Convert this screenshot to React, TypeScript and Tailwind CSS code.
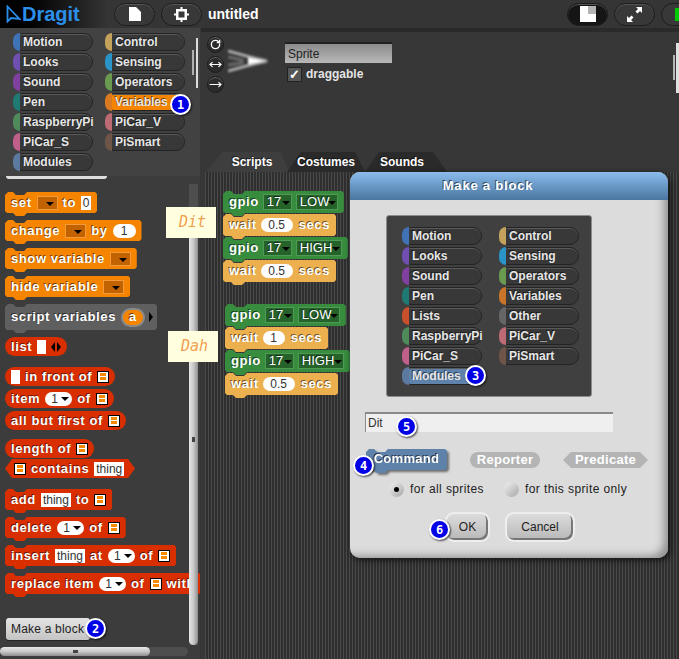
import React from "react";
import { MoveHorizontal, MoveRight, RotateCw } from "lucide-react";

const sans = "font-['Liberation_Sans',Arial,sans-serif]";
const glow = "[text-shadow:-1px_-1px_0_rgba(0,0,0,.55)]";

const commandShape =
  "[clip-path:polygon(0_3px,3px_0,8px_0,11px_3px,19px_3px,22px_0,calc(100%_-_2px)_0,100%_2px,100%_calc(100%_-_5px),calc(100%_-_2px)_calc(100%_-_3px),22px_calc(100%_-_3px),19px_100%,11px_100%,8px_calc(100%_-_3px),2px_calc(100%_-_3px),0_calc(100%_-_5px))]";

const paletteLeft = [
  { name: "Motion", cap: "bg-[#3f73b5]" },
  { name: "Looks", cap: "bg-[#6f4fb0]" },
  { name: "Sound", cap: "bg-[#80409f]" },
  { name: "Pen", cap: "bg-[#1f7a74]" },
  { name: "RaspberryPi", cap: "bg-[#4f8a5a]" },
  { name: "PiCar_S", cap: "bg-[#c0608a]" },
  { name: "Modules", cap: "bg-[#5c7a9f]" },
];

const paletteRight = [
  { name: "Control", cap: "bg-[#c4a25c]" },
  { name: "Sensing", cap: "bg-[#2a93c8]" },
  { name: "Operators", cap: "bg-[#6a9a50]" },
  { name: "Variables", cap: "bg-[#d97a20]" },
  { name: "PiCar_V", cap: "bg-[#bc6a74]" },
  { name: "PiSmart", cap: "bg-[#6f5548]" },
];

const dialogLeft = [
  paletteLeft[0],
  paletteLeft[1],
  paletteLeft[2],
  paletteLeft[3],
  { name: "Lists", cap: "bg-[#c8502c]" },
  paletteLeft[4],
  paletteLeft[5],
  paletteLeft[6],
];

const dialogRight = [
  paletteRight[0],
  paletteRight[1],
  paletteRight[2],
  { name: "Variables", cap: "bg-[#c8752a]" },
  { name: "Other", cap: "bg-[#666666]" },
  paletteRight[4],
  paletteRight[5],
];

function Category({ name, cap, active }: { name: string; cap: string; active?: string }) {
  return (
    <div
      className={`relative flex h-[18px] w-[80px] items-center overflow-visible rounded-full border border-[#232323] pl-[9px] text-[12px] font-bold text-[#e6e6e6] whitespace-nowrap shadow-[inset_0_1px_0_#5a5a5a] ${active ?? "bg-[#383838]"} ${glow}`}
    >
      <span className={`absolute -left-px -top-px h-[18px] w-[7px] rounded-l-full ${cap}`} />
      {name}
    </div>
  );
}

function Badge({ n, pos }: { n: number; pos: string }) {
  return (
    <div
      className={`absolute z-30 flex h-[21px] w-[21px] items-center justify-center rounded-full border-[2.5px] border-white bg-[#0000e6] font-['DejaVu_Sans_Mono',monospace] text-[12px] font-bold text-white shadow-[1px_1px_2px_rgba(0,0,0,.7)] ${pos}`}
    >
      {n}
    </div>
  );
}

function Command({ color, className, children }: { color: string; className?: string; children: React.ReactNode }) {
  return (
    <div
      className={`flex h-[24px] w-fit shrink-0 items-center gap-[5px] whitespace-nowrap pb-[3px] pl-[6px] pr-[6px] text-[13px] font-bold tracking-[.6px] text-white ${glow} ${commandShape} ${color} ${className ?? ""}`}
    >
      {children}
    </div>
  );
}

function Reporter({ className, children }: { className?: string; children: React.ReactNode }) {
  return (
    <div
      className={`flex h-[19px] w-fit items-center gap-[5px] whitespace-nowrap rounded-full bg-[#d92e00] pl-[6px] pr-[6px] text-[13px] font-bold tracking-[.6px] text-white ${glow} ${className ?? ""}`}
    >
      {children}
    </div>
  );
}

function VarSlot({ w = "w-[21px]" }: { w?: string }) {
  return (
    <span className={`relative block h-[14px] ${w} border border-[#f59a3a] bg-[#c26200]`}>
      <span className="absolute right-[3px] top-[5px] h-0 w-0 border-x-[4px] border-t-[4px] border-x-transparent border-t-black" />
    </span>
  );
}

function NumPill({ value, drop, w }: { value: string; drop?: boolean; w: string }) {
  return (
    <span
      className={`relative flex h-[14px] ${w} items-center justify-center rounded-full bg-white text-[12px] font-normal tracking-normal text-[#333] [text-shadow:none] ${drop ? "pr-[8px]" : ""}`}
    >
      {value}
      {drop && (
        <span className="absolute right-[3px] top-[5px] h-0 w-0 border-x-[4px] border-t-[4px] border-x-transparent border-t-black" />
      )}
    </span>
  );
}

function TextSlot({ value, w }: { value: string; w: string }) {
  return (
    <span
      className={`flex h-[14px] ${w} items-center justify-center bg-white text-[12px] font-normal tracking-normal text-[#333] [text-shadow:none]`}
    >
      {value}
    </span>
  );
}

function ListSlot() {
  return (
    <span className="flex h-[12px] w-[12px] flex-col justify-center gap-[1px] border border-black bg-white px-[2px]">
      <span className="block h-[3px] bg-[#f58a00]" />
      <span className="block h-[3px] bg-[#f58a00]" />
    </span>
  );
}

function DarkDrop({ value, w }: { value: string; w: string }) {
  return (
    <span
      className={`relative flex h-[16px] ${w} items-center border border-[#4f9a55] bg-[#25632b] pl-[3px] text-[13px] font-normal tracking-normal text-white`}
    >
      {value}
      <span className="absolute right-[1px] top-[6px] h-0 w-0 border-x-[4px] border-t-[4px] border-x-transparent border-t-black" />
    </span>
  );
}

function Gpio({ level, w }: { level: string; w: string }) {
  return (
    <Command color="bg-[#378c3e]" className={`-mb-[2px] ${w} h-[25px] !gap-[4px]`}>
      gpio
      <DarkDrop value="17" w="w-[29px]" />
      <DarkDrop value={level} w={level === "LOW" ? "w-[42px]" : "w-[46px]"} />
    </Command>
  );
}

function Wait({ value, w, pill }: { value: string; w: string; pill: string }) {
  return (
    <Command color="bg-[#edb04f]" className={`-mb-[2px] ${w} h-[25px] !gap-[4px]`}>
      wait
      <NumPill value={value} w={pill} />
      <span className="ml-[2px]">secs</span>
    </Command>
  );
}

function RoundButton({ dark, children }: { dark?: boolean; children?: React.ReactNode }) {
  return (
    <div
      className={`flex h-[23px] w-[41px] shrink-0 items-center justify-center rounded-full border border-[#1d1d1d] shadow-[inset_0_1px_0_#555] ${dark ? "bg-[#151515]" : "bg-[#383838]"}`}
    >
      {children}
    </div>
  );
}

function RotationButton({ children }: { children: React.ReactNode }) {
  return (
    <div className="flex h-[17px] w-[17px] items-center justify-center rounded-full border border-[#1c1c1c] bg-[#2b2b2b] text-white shadow-[inset_0_1px_0_#666]">
      {children}
    </div>
  );
}

export default function App() {
  return (
    <div className={`relative h-[659px] w-[679px] overflow-hidden bg-[#373737] ${sans}`}>
      {/* Top bar */}
      <header className="flex h-[28px] items-center bg-[#353535]">
        <div className="flex h-full w-[108px] shrink-0 items-center gap-[1px] bg-gradient-to-r from-black via-[#111] to-[#353535] pl-[6px]">
          <svg width="15" height="18" viewBox="0 0 15 18" fill="none">
            <path d="M1.5 1.5 L13.5 14 L5 13 L1.5 16.5 Z" stroke="#2a8fe8" strokeWidth="1.8" />
          </svg>
          <span className="text-[20px] font-bold leading-none text-[#2c90ea]">Dragit</span>
        </div>
        <div className="ml-[6px] flex gap-[6px]">
          <RoundButton>
            <svg width="12" height="14" viewBox="0 0 12 14">
              <path d="M0 0 H7 L12 5 V14 H0 Z" fill="#fff" />
            </svg>
          </RoundButton>
          <RoundButton>
            <svg width="15" height="15" viewBox="0 0 15 15" fill="#fff">
              <rect x="2" y="2" width="11" height="11" />
              <rect x="6.5" y="0" width="2" height="15" />
              <rect x="0" y="6.5" width="15" height="2" />
              <rect x="4.5" y="4.5" width="6" height="6" fill="#383838" />
            </svg>
          </RoundButton>
        </div>
        <span className="ml-[6px] text-[14px] font-bold text-white">untitled</span>
        <div className="ml-auto flex gap-[6px] pr-0">
          <RoundButton dark>
            <svg width="16" height="16" viewBox="0 0 16 16">
              <rect width="16" height="16" fill="#fff" />
              <rect x="8" width="8" height="8" fill="#b5b5b5" />
            </svg>
          </RoundButton>
          <RoundButton>
            <svg width="15" height="15" viewBox="0 0 15 15" fill="#fff">
              <path d="M9 0h6v6l-2-2-2.5 2.5-2-2L11 2z" />
              <path d="M6 15H0V9l2 2 2.5-2.5 2 2L4 13z" />
            </svg>
          </RoundButton>
          <div className="-mr-[23px] flex h-[23px] w-[41px] shrink-0 items-center rounded-full border border-[#1d1d1d] bg-[#383838] pl-[13px]">
            <span className="h-[13px] w-[6px] bg-[#00cc00]" />
          </div>
        </div>
      </header>

      <div className="flex h-[631px]">
        {/* Left column */}
        <aside className="relative flex h-full w-[200px] shrink-0 flex-col overflow-hidden">
          <div className="relative flex h-[148px] shrink-0 gap-[12px] bg-[#424242] pl-[13px] pt-[5px]">
            <div className="flex flex-col gap-[2px]">
              {paletteLeft.map((c) => (
                <Category key={c.name} {...c} />
              ))}
            </div>
            <div className="flex flex-col gap-[2px]">
              {paletteRight.map((c) => (
                <Category key={c.name} {...c} active={c.name === "Variables" ? "bg-[#f58500]" : undefined} />
              ))}
            </div>
            <span className="absolute right-[2px] top-[10px] h-[50px] w-[2px] bg-[#dcdcdc]" />
            <span className="absolute right-[6px] top-[22px] h-[25px] w-[2px] bg-[#b0b0b0]" />
          </div>
          <div className="h-[4px] shrink-0 bg-[#3c3c3c] pl-[6px]">
            <div className="h-[3px] w-[101px] rounded-b-sm bg-[#dedede]" />
          </div>

          {/* Palette */}
          <div className="relative flex flex-1 flex-col items-start overflow-hidden bg-[#3c3c3c] pl-[5px] pt-[12px]">
            <Command color="bg-[#f58500]">
              set <VarSlot /> to <TextSlot value="0" w="w-[10px]" />
            </Command>
            <Command color="bg-[#f58500]" className="mt-[4px]">
              change <VarSlot /> by <NumPill value="1" w="w-[23px]" />
            </Command>
            <Command color="bg-[#f58500]" className="mt-[4px]">
              show variable <VarSlot />
            </Command>
            <Command color="bg-[#f58500]" className="mt-[4px]">
              hide variable <VarSlot />
            </Command>
            <Command color="bg-[#5f5f5f]" className="mt-[4px] h-[29px] !pr-[4px]">
              script variables
              <span className="flex h-[19px] w-[24px] items-center justify-center rounded-full border-[2px] border-[#8a8a8a] bg-[#f58500] text-[13px]">
                a
              </span>
              <span className="-ml-[1px] h-0 w-0 border-y-[5px] border-l-[4px] border-y-transparent border-l-black" />
            </Command>
            <Reporter className="mt-[4px]">
              list
              <span className="h-[14px] w-[9px] bg-white" />
              <span className="flex gap-[2px]">
                <span className="h-0 w-0 border-y-[5px] border-r-[4px] border-y-transparent border-r-black" />
                <span className="h-0 w-0 border-y-[5px] border-l-[4px] border-y-transparent border-l-black" />
              </span>
            </Reporter>
            <Reporter className="mt-[11px]">
              <span className="h-[14px] w-[9px] bg-white" />
              in front of <ListSlot />
            </Reporter>
            <Reporter className="mt-[3px]">
              item <NumPill value="1" drop w="w-[27px]" /> of <ListSlot />
            </Reporter>
            <Reporter className="mt-[3px]">
              all but first of <ListSlot />
            </Reporter>
            <Reporter className="mt-[9px]">
              length of <ListSlot />
            </Reporter>
            <div
              className={`mt-px flex h-[19px] w-[130px] items-center gap-[5px] bg-[#d92e00] pl-[9px] text-[13px] font-bold tracking-[.6px] text-white whitespace-nowrap ${glow} [clip-path:polygon(0_50%,7px_0,calc(100%_-_7px)_0,100%_50%,calc(100%_-_7px)_100%,7px_100%)]`}
            >
              <ListSlot /> contains <TextSlot value="thing" w="w-[30px]" />
            </div>
            <Command color="bg-[#d92e00]" className="mt-[11px]">
              add <TextSlot value="thing" w="w-[30px]" /> to <ListSlot />
            </Command>
            <Command color="bg-[#d92e00]" className="mt-[4px]">
              delete <NumPill value="1" drop w="w-[27px]" /> of <ListSlot />
            </Command>
            <Command color="bg-[#d92e00]" className="mt-[4px]">
              insert <TextSlot value="thing" w="w-[30px]" /> at <NumPill value="1" drop w="w-[27px]" /> of <ListSlot />
            </Command>
            <Command color="bg-[#d92e00]" className="mt-[4px] w-[300px]">
              replace item <NumPill value="1" drop w="w-[27px]" /> of <ListSlot /> with
            </Command>
            <button className="mt-[21px] ml-px flex h-[22px] w-[84px] items-center rounded-[3px] bg-gradient-to-b from-[#e4e4e4] to-[#c4c4c4] pl-[5px] text-[12px] tracking-[.2px] text-[#222] whitespace-nowrap shadow-[0_1px_1px_#222]">
              Make a block
            </button>

            {/* scrollbars */}
            <div className="absolute right-[2px] top-[4px] h-[461px] w-[9px] bg-[#4e4e4e]">
              <div className="absolute bottom-0 left-0 flex h-[410px] w-full items-center justify-center rounded-b-full bg-gradient-to-r from-[#e8e8e8] via-[#c8c8c8] to-[#8f8f8f]">
                <span className="mb-[2px] h-[5px] w-[3px] bg-[#444]" />
              </div>
            </div>
            <div className="absolute bottom-[3px] left-0 h-[9px] w-[188px] rounded-full bg-[#4e4e4e]">
              <div className="flex h-full w-[150px] items-center justify-center rounded-full bg-gradient-to-b from-[#e8e8e8] via-[#c8c8c8] to-[#8f8f8f]">
                <span className="h-[3px] w-[5px] bg-[#444]" />
              </div>
            </div>
          </div>
        </aside>

        {/* Right column */}
        <main className="flex min-w-0 flex-1 flex-col">
          <div className="ml-[1px] h-[4px] shrink-0 bg-[#2a2a2a]" />
          <section className="relative flex h-[120px] shrink-0 pl-[7px] pt-[4px]">
            <div className="flex flex-col gap-[3px]">
              <RotationButton>
                <RotateCw size={11} strokeWidth={3} />
              </RotationButton>
              <RotationButton>
                <MoveHorizontal size={13} strokeWidth={2} />
              </RotationButton>
              <RotationButton>
                <MoveRight size={13} strokeWidth={2} />
              </RotationButton>
            </div>
            <svg className="ml-[4px] mt-[11px] blur-[1px]" width="40" height="28" viewBox="0 0 40 28" fill="none">
              <path d="M0 4 L22 10 L39 14 L22 18 L0 24" stroke="#a8a8a8" strokeWidth="3" />
              <path d="M0 10 L14 13 L14 16 L0 18" stroke="#6a6a6a" strokeWidth="3" />
              <path d="M20 10.5 L37 14 L20 17.5 Z" fill="#ffffff" />
            </svg>
            <div className="ml-[17px] flex flex-col pt-[6px]">
              <div className="flex h-[21px] w-[107px] items-center border-t-2 border-[#222] bg-gradient-to-b from-[#8c8c8c] to-[#b8b8b8] pl-[3px] text-[12px] text-[#222]">
                Sprite
              </div>
              <div className="mt-[2px] ml-[2px] flex items-center gap-[4px] text-[12px] font-bold text-[#e4e4e4]">
                <span className="flex h-[15px] w-[15px] items-center justify-center border border-[#222] bg-[#555] text-[13px] leading-none text-white">
                  ✓
                </span>
                draggable
              </div>
            </div>
            <span className="absolute right-[4px] top-[23px] h-[25px] w-[2px] bg-[#b5b5b5]" />
            <span className="absolute right-0 top-[11px] h-[50px] w-[3px] bg-[#e0e0e0]" />
          </section>

          {/* Tabs */}
          <div className={`flex h-[20px] shrink-0 pl-[6px] text-[12px] font-bold text-white ${glow}`}>
            <div className="flex h-full w-[84px] items-center justify-center bg-[#3e3e3e] pl-[8px] [clip-path:polygon(0_100%,16px_0,calc(100%_-_10px)_0,100%_100%)]">
              Scripts
            </div>
            <div className="-ml-[3px] flex h-full w-[78px] items-center justify-center bg-[#2a2a2a] [clip-path:polygon(0_100%,14px_0,calc(100%_-_10px)_0,100%_100%)]">
              Costumes
            </div>
            <div className="flex h-full w-[82px] items-center justify-center bg-[#2a2a2a] pr-[8px] [clip-path:polygon(0_100%,14px_0,calc(100%_-_14px)_0,100%_100%)]">
              Sounds
            </div>
          </div>

          {/* Scripts area */}
          <section className="relative ml-[5px] flex-1 bg-[repeating-linear-gradient(90deg,#4a4a4a_0,#4a4a4a_1px,#2f2f2f_1px,#2f2f2f_3px)]">
            <div className="absolute left-[18px] top-[19px] flex flex-col">
              <Gpio level="LOW" w="w-[120px]" />
              <Wait value="0.5" w="w-[114px]" pill="w-[32px]" />
              <Gpio level="HIGH" w="w-[122px]" />
              <Wait value="0.5" w="w-[114px]" pill="w-[32px]" />
            </div>
            <div className="absolute left-[20px] top-[132px] flex flex-col">
              <Gpio level="LOW" w="w-[120px]" />
              <Wait value="1" w="w-[104px]" pill="w-[22px]" />
              <Gpio level="HIGH" w="w-[122px]" />
              <Wait value="0.5" w="w-[114px]" pill="w-[32px]" />
            </div>
          </section>
        </main>
      </div>

      {/* Comment notes */}
      <div className="absolute left-[166px] top-[207px] z-10 flex h-[31px] w-[50px] items-center justify-center bg-[#ffffe0] pb-px pl-[3px] font-['DejaVu_Sans_Mono',monospace] text-[15px] italic text-[#f0a050]">
        Dit
      </div>
      <div className="absolute left-[168px] top-[331px] z-10 flex h-[31px] w-[50px] items-center justify-center bg-[#ffffe0] pb-px pl-[3px] font-['DejaVu_Sans_Mono',monospace] text-[15px] italic text-[#f0a050]">
        Dah
      </div>

      {/* Make a block dialog */}
      <div className="absolute left-[350px] top-[172px] z-20 flex h-[386px] w-[318px] flex-col rounded-[10px] bg-[#dcdcdc] shadow-[inset_-8px_-6px_8px_-4px_#8f8f8f,2px_2px_6px_#111]">
        <div
          className={`flex h-[28px] shrink-0 items-center justify-center rounded-t-[10px] bg-gradient-to-b from-[#8bbcec] to-[#4a76a0] pr-[42px] text-[13px] font-bold tracking-[.8px] text-white ${glow}`}
        >
          Make a block
        </div>
        <div className="ml-[36px] mt-[15px] flex h-[182px] w-[206px] gap-[17px] rounded-[3px] border border-[#8c8c8c] bg-[#404040] pl-[15px] pt-[11px]">
          <div className="flex flex-col gap-[2px]">
            {dialogLeft.map((c) => (
              <Category key={c.name} {...c} active={c.name === "Modules" ? "bg-[#5f82ab]" : undefined} />
            ))}
          </div>
          <div className="flex flex-col gap-[2px]">
            {dialogRight.map((c) => (
              <Category key={c.name} {...c} />
            ))}
          </div>
        </div>
        <div className="ml-[15px] mt-[15px] flex h-[20px] w-[248px] items-center border-l border-t-2 border-[#8a8a8a] bg-[#efefef] pl-[2px] text-[12px] text-[#333]">
          Dit
        </div>
        <div className="relative mt-[17px] flex h-[22px] items-center text-[13px] font-bold tracking-[.3px] text-white">
          <div className="absolute left-[16px] top-0 drop-shadow-[2px_2px_1px_rgba(0,0,0,.5)]">
            <div
              className={`flex h-[24px] w-[81px] items-start justify-center bg-[#5f82ab] ${commandShape} ${glow}`}
            >
              Command
            </div>
          </div>
          <div className="absolute left-[120px] top-[3px] flex h-[16px] w-[70px] items-center justify-center rounded-full bg-[#b4b4b4]">
            Reporter
          </div>
          <div className="absolute left-[213px] top-[3px] flex h-[16px] w-[85px] items-center justify-center bg-[#b4b4b4] [clip-path:polygon(0_50%,8px_0,calc(100%_-_8px)_0,100%_50%,calc(100%_-_8px)_100%,8px_100%)]">
            Predicate
          </div>
        </div>
        <div className="ml-[39px] mt-[9px] flex h-[18px] items-center text-[12px] tracking-[.4px] text-[#222]">
          <span className="flex h-[15px] w-[15px] items-center justify-center rounded-full bg-gradient-to-br from-[#f2f2f2] to-[#a8a8a8]">
            <span className="h-[5px] w-[5px] rounded-full bg-black" />
          </span>
          <span className="ml-[6px]">for all sprites</span>
          <span className="ml-[20px] h-[15px] w-[15px] rounded-full bg-gradient-to-br from-[#f2f2f2] to-[#a8a8a8]" />
          <span className="ml-[6px]">for this sprite only</span>
        </div>
        <div className="ml-[95px] mt-[14px] flex gap-[15px] text-[12px] text-[#222]">
          <button className="flex h-[30px] w-[45px] items-center justify-center rounded-[9px] border-2 border-[#eeeeee] bg-gradient-to-b from-[#dcdcdc] to-[#b8b8b8] shadow-[inset_-2px_-2px_0_#777]">
            OK
          </button>
          <button className="flex h-[30px] w-[70px] items-center justify-center rounded-[9px] border-2 border-[#eeeeee] bg-gradient-to-b from-[#dcdcdc] to-[#b8b8b8] shadow-[inset_-2px_-2px_0_#777]">
            Cancel
          </button>
        </div>
      </div>

      <Badge n={1} pos="left-[170px] top-[94px]" />
      <Badge n={2} pos="left-[85px] top-[618px]" />
      <Badge n={3} pos="left-[465px] top-[365px]" />
      <Badge n={4} pos="left-[353px] top-[455px]" />
      <Badge n={5} pos="left-[396px] top-[416px]" />
      <Badge n={6} pos="left-[429px] top-[519px]" />
    </div>
  );
}
